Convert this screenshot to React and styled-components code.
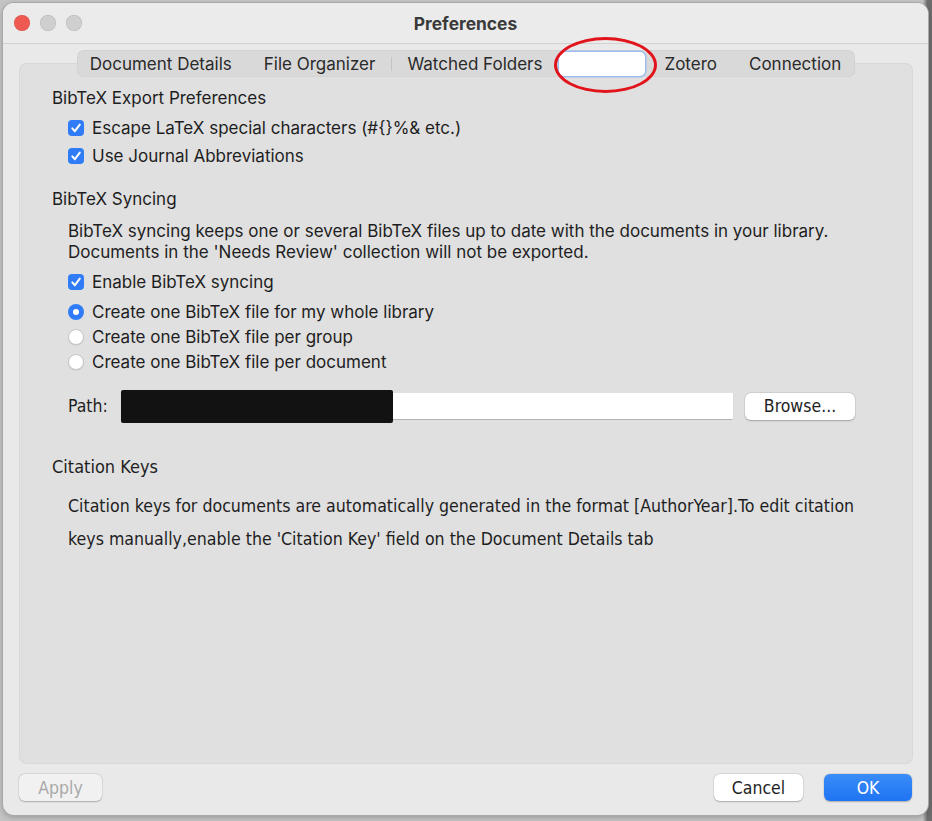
import React from 'react';
import styled, { createGlobalStyle } from 'styled-components';

const GlobalStyle = createGlobalStyle`
  html, body {
    margin: 0;
    padding: 0;
    background: #b9b9b9;
  }
  body {
    font-family: "Inter", "Liberation Sans", sans-serif;
    color: #1f1f1f;
  }
`;

const narrow = `"Liberation Sans Narrow", "DejaVu Sans Condensed", "Liberation Sans", sans-serif`;

const Screen = styled.div`
  width: 932px;
  height: 821px;
  padding: 3px 4px 6px 3px;
  box-sizing: border-box;
  background: linear-gradient(90deg, #c4c4c4 0, #c4c4c4 99%, #6d6d6d 99.5%);
`;

const Window = styled.div`
  height: 100%;
  display: flex;
  flex-direction: column;
  background: #e9e9e9;
  border-radius: 11px;
  box-shadow: 0 0 0 1px #a9a9a9, 0 2px 6px rgba(0, 0, 0, 0.25);
  overflow: hidden;
`;

const TitleBar = styled.div`
  height: 40px;
  flex: none;
  display: grid;
  grid-template-columns: 1fr auto 1fr;
  align-items: center;
  border-bottom: 1px solid #d2d2d2;
  background: #ebebeb;
`;

const Lights = styled.div`
  display: flex;
  gap: 10px;
  padding-left: 11px;
`;

const Light = styled.span`
  width: 16px;
  height: 16px;
  border-radius: 50%;
  background: ${p => p.$color};
  box-shadow: inset 0 0 0 0.5px rgba(0, 0, 0, 0.12);
`;

const Title = styled.div`
  font-size: 17.4px;
  font-weight: 700;
  color: #3a3a3a;
`;

const Body = styled.div`
  flex: 1;
  display: flex;
  flex-direction: column;
  padding: 6px 15px 14px 16px;
  min-height: 0;
`;

const TabRow = styled.div`
  display: flex;
  justify-content: center;
  position: relative;
  z-index: 1;
  margin-bottom: -14px;
`;

const Tabs = styled.div`
  display: flex;
  align-items: center;
  height: 27px;
  border-radius: 7px;
  background: #d9d9d9;
  box-shadow: inset 0 0 0 0.5px rgba(0, 0, 0, 0.06);
`;

const Tab = styled.div`
  position: relative;
  height: 23px;
  display: flex;
  align-items: center;
  padding: 0 ${p => p.$r ?? 16}px 0 ${p => p.$l ?? 16}px;
  font-size: 17px;
  color: #2a2a2a;
  white-space: nowrap;

  & + &::before {
    content: '';
    position: absolute;
    left: 0;
    top: 5px;
    height: 14px;
    width: 1px;
    background: #c4c4c4;
  }
`;

const ActiveTab = styled.div`
  position: relative;
  width: 86px;
  height: 24px;
  margin: 0 2px 0 1px;
  background: #ffffff;
  border-radius: 5px;
  box-shadow: 0 0 0 1.5px #9dbdf0;
`;

const Marker = styled.div`
  position: absolute;
  left: -5px;
  top: -15px;
  width: 97px;
  height: 50px;
  border: 3px solid #e2141b;
  border-radius: 50%;
  pointer-events: none;
`;

const Panel = styled.div`
  flex: 1;
  background: #e0e0e0;
  border-radius: 8px;
  box-shadow: inset 0 0 0 1px #d8d8d8;
  padding: 25px 20px 0 33px;
`;

const Heading = styled.div`
  font-size: 17px;
  line-height: 20px;
  color: #1e1e1e;
  margin-top: ${p => p.$top || 0}px;
`;

const NarrowHeading = styled(Heading)`
  font-family: ${narrow};
  font-size: 18px;
`;

const Indent = styled.div`
  padding-left: 16px;
  margin-top: ${p => p.$top || 0}px;
`;

const Row = styled.label`
  display: flex;
  align-items: center;
  height: ${p => p.$h || 28}px;
  gap: 8px;
  font-size: 17px;
  color: #1e1e1e;
`;

const RadioGroup = styled.div`
  margin-top: 3px;
`;

const CheckBox = styled.span`
  width: 16px;
  height: 16px;
  border-radius: 4px;
  background: #2f7cf6;
  display: flex;
  align-items: center;
  justify-content: center;
  flex: none;
`;

const Radio = styled.span`
  width: 16px;
  height: 16px;
  border-radius: 50%;
  box-sizing: border-box;
  flex: none;
  display: flex;
  align-items: center;
  justify-content: center;
  background: ${p => (p.$on ? '#2f7cf6' : '#ffffff')};
  border: ${p => (p.$on ? 'none' : '0.5px solid #c8c8c8')};
  box-shadow: ${p => (p.$on ? 'none' : '0 0.5px 1px rgba(0,0,0,0.12)')};

  &::after {
    content: '';
    display: ${p => (p.$on ? 'block' : 'none')};
    width: 6px;
    height: 6px;
    border-radius: 50%;
    background: #ffffff;
  }
`;

const Para = styled.p`
  margin: 12px 0 5px;
  font-size: 17px;
  line-height: 21px;
  color: #1e1e1e;
`;

const PathRow = styled.div`
  display: flex;
  align-items: center;
  height: 34px;
  margin-top: 15px;
  font-family: ${narrow};
  font-size: 17.5px;
`;

const PathLabel = styled.span`
  width: 53px;
  color: #1e1e1e;
`;

const PathField = styled.div`
  position: relative;
  width: 612px;
  height: 26px;
  background: #ffffff;
  box-shadow: 0 0.5px 1px rgba(0, 0, 0, 0.2);
`;

const Redacted = styled.div`
  position: absolute;
  left: 0;
  top: -3px;
  width: 272px;
  height: 33px;
  background: #121212;
  border-radius: 2px;
`;

const Button = styled.button`
  height: 27px;
  width: ${p => p.$w}px;
  margin-left: ${p => p.$ml || 0}px;
  border: none;
  border-radius: 6px;
  font-family: ${narrow};
  font-size: 17.5px;
  color: ${p => (p.$primary ? '#ffffff' : p.disabled ? '#a9a9a9' : '#1e1e1e')};
  background: ${p => (p.$primary ? 'linear-gradient(#3a8cf8, #1f74f2)' : p.disabled ? '#f1f1f1' : '#ffffff')};
  box-shadow: 0 0.5px 1.5px rgba(0, 0, 0, 0.25), 0 0 0 0.5px rgba(0, 0, 0, 0.06);
  padding: 0;
`;

const CiteText = styled.p`
  margin: 13px 0 0;
  padding-left: 16px;
  font-family: ${narrow};
  font-size: 17.6px;
  line-height: 33px;
  color: #1e1e1e;
`;

const Footer = styled.div`
  display: flex;
  align-items: center;
  margin-top: 10px;
  padding-right: 1px;
`;

const Spacer = styled.div`
  flex: 1;
`;

function Check() {
  return (
    <CheckBox>
      <svg width="12" height="12" viewBox="0 0 12 12">
        <path d="M2.3 6.4 L4.9 9.2 L9.8 2.6" fill="none" stroke="#fff" strokeWidth="2" strokeLinecap="round" strokeLinejoin="round" />
      </svg>
    </CheckBox>
  );
}

const tabs = [
  { label: 'Document Details', l: 13 },
  { label: 'File Organizer' },
  { label: 'Watched Folders' },
];

export default function App() {
  return (
    <>
      <GlobalStyle />
      <Screen>
        <Window>
          <TitleBar>
            <Lights>
              <Light $color="#ee5a52" />
              <Light $color="#cfcfcf" />
              <Light $color="#cfcfcf" />
            </Lights>
            <Title>Preferences</Title>
          </TitleBar>
          <Body>
            <TabRow>
              <Tabs>
                {tabs.map(t => (
                  <Tab key={t.label} $l={t.l}>{t.label}</Tab>
                ))}
                <ActiveTab>
                  <Marker />
                </ActiveTab>
                <Tab $l={17}>Zotero</Tab>
                <Tab $r={14}>Connection</Tab>
              </Tabs>
            </TabRow>
            <Panel>
              <Heading>BibTeX Export Preferences</Heading>
              <Indent $top={6}>
                <Row><Check />Escape LaTeX special characters (#{'{}'}%&amp; etc.)</Row>
                <Row><Check />Use Journal Abbreviations</Row>
              </Indent>

              <Heading $top={19}>BibTeX Syncing</Heading>
              <Indent>
                <Para>
                  BibTeX syncing keeps one or several BibTeX files up to date with the documents in your library.
                  <br />
                  Documents in the 'Needs Review' collection will not be exported.
                </Para>
                <Row><Check />Enable BibTeX syncing</Row>
                <RadioGroup>
                  <Row $h={25}><Radio $on />Create one BibTeX file for my whole library</Row>
                  <Row $h={25}><Radio />Create one BibTeX file per group</Row>
                  <Row $h={25}><Radio />Create one BibTeX file per document</Row>
                </RadioGroup>
                <PathRow>
                  <PathLabel>Path:</PathLabel>
                  <PathField>
                    <Redacted />
                  </PathField>
                  <Button $w={110} $ml={12}>Browse...</Button>
                </PathRow>
              </Indent>

              <NarrowHeading $top={34}>Citation Keys</NarrowHeading>
              <CiteText>
                Citation keys for documents are automatically generated in the format [AuthorYear].To edit citation
                <br />
                keys manually,enable the 'Citation Key' field on the Document Details tab
              </CiteText>
            </Panel>
            <Footer>
              <Button $w={83} disabled>Apply</Button>
              <Spacer />
              <Button $w={89}>Cancel</Button>
              <Button $w={88} $ml={21} $primary>OK</Button>
            </Footer>
          </Body>
        </Window>
      </Screen>
    </>
  );
}
